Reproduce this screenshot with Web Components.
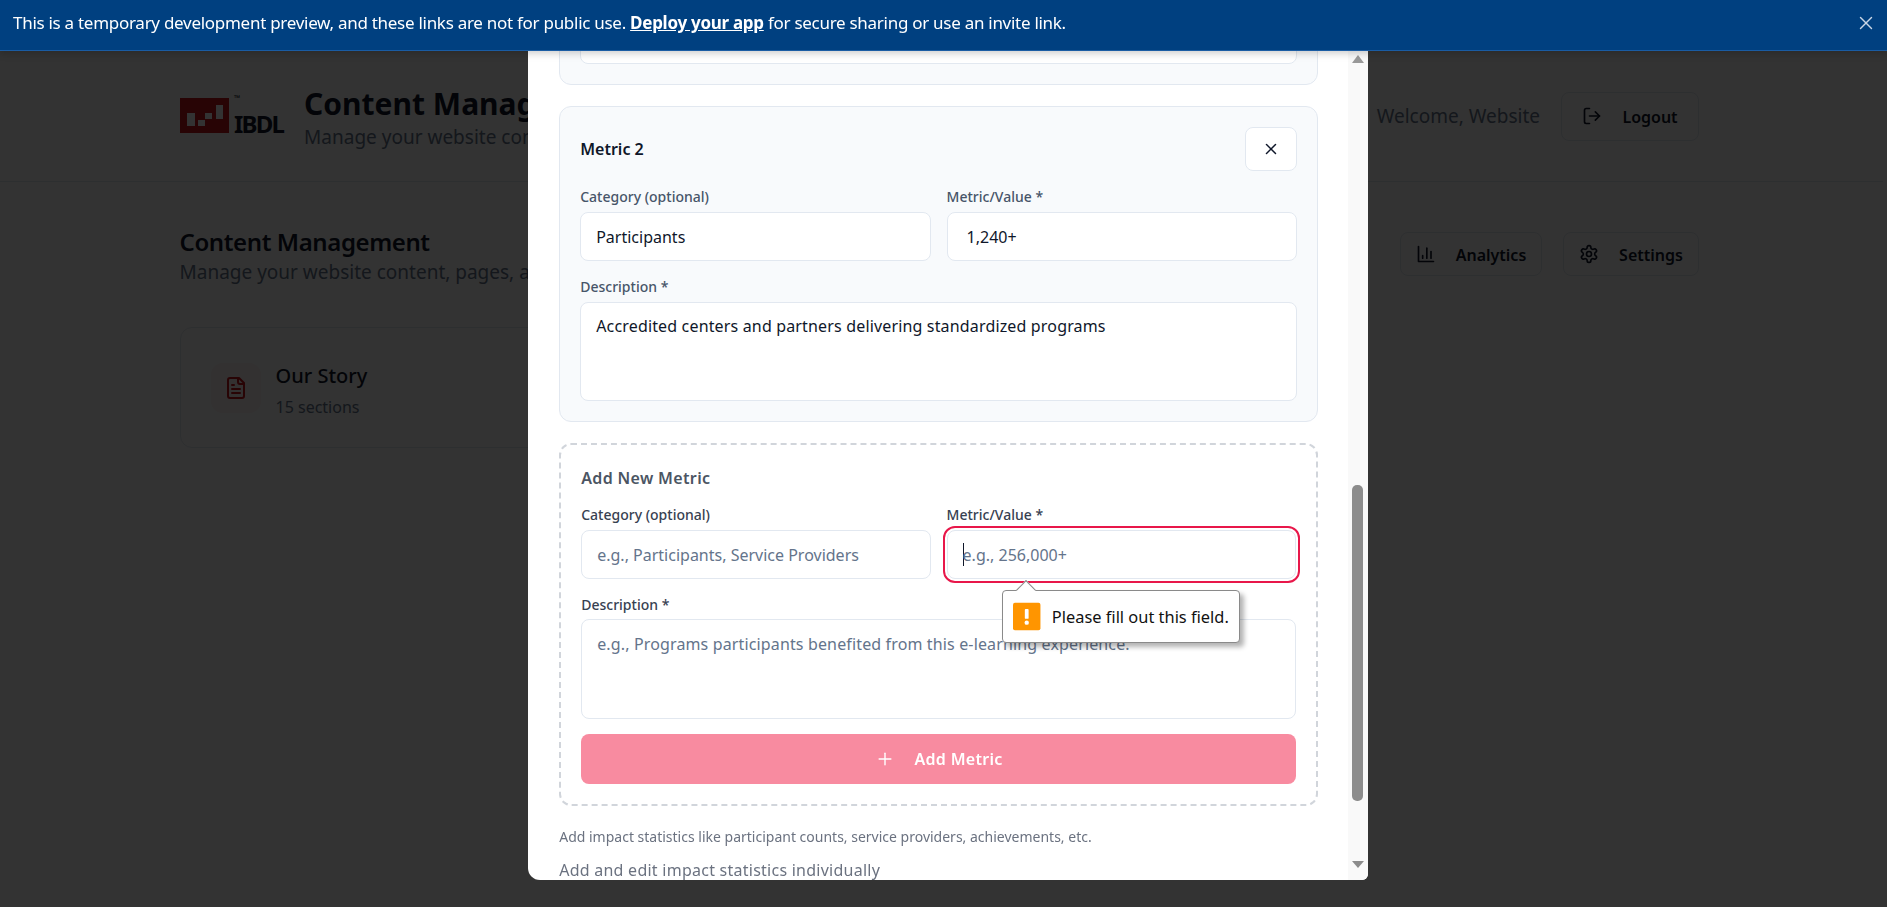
<!doctype html>
<html lang="en">
<head>
<meta charset="utf-8">
<title>Content Management</title>
<style>
  html, body { margin: 0; height: 100%; overflow: hidden; background: #fff; }
  body { font-family: "Noto Sans", "Liberation Sans", sans-serif; color: #0f172a; }
</style>
</head>
<body>
<preview-banner>
  This is a temporary development preview, and these links are not for public use. <a slot="link">Deploy your app</a>
</preview-banner>

<app-header>
  <span slot="title">Content Management</span>
  <span slot="subtitle">Manage your website content and pages</span>
  <span slot="welcome">Welcome, Website</span>
</app-header>

<page-section>
  <span slot="title">Content Management</span>
  <span slot="subtitle">Manage your website content, pages, and settings</span>
  <ghost-button slot="actions" icon="chart" style="width:142px">Analytics</ghost-button>
  <ghost-button slot="actions" icon="gear" style="width:136px">Settings</ghost-button>
  <content-card>
    <span slot="title">Our Story</span>
    <span slot="meta">15 sections</span>
  </content-card>
</page-section>

<modal-backdrop></modal-backdrop>

<modal-dialog>
  <metric-card stub>
    <form-field multiline><span></span></form-field>
  </metric-card>

  <metric-card>
    <span slot="title">Metric 2</span>
    <form-grid>
      <form-field>
        <span slot="label">Category (optional)</span>
        <span>Participants</span>
      </form-field>
      <form-field>
        <span slot="label">Metric/Value *</span>
        <span style="padding-left:4px">1,240+</span>
      </form-field>
    </form-grid>
    <form-field multiline>
      <span slot="label">Description *</span>
      <span style="letter-spacing:.16px">Accredited centers and partners delivering standardized programs</span>
    </form-field>
  </metric-card>

  <add-metric>
    <span slot="title">Add New Metric</span>
    <form-grid>
      <form-field strong empty>
        <span slot="label">Category (optional)</span>
        <span>e.g., Participants, Service Providers</span>
      </form-field>
      <form-field strong empty focused>
        <span slot="label">Metric/Value *</span>
        <span>e.g., 256,000+</span>
        <validation-bubble slot="bubble">Please fill out this field.</validation-bubble>
      </form-field>
    </form-grid>
    <form-field strong empty multiline>
      <span slot="label">Description *</span>
      <span style="letter-spacing:.14px">e.g., Programs participants benefited from this e-learning experience.</span>
    </form-field>
    <span slot="button">Add Metric</span>
  </add-metric>

  <span slot="hint">Add impact statistics like participant counts, service providers, achievements, etc.</span>
  <span slot="note">Add and edit impact statistics individually</span>
</modal-dialog>

<script>
const html = (strings, ...expressions) => {
  const template = document.createElement('template')
  template.innerHTML = strings.reduce((result, str, i) => result + str + (expressions[i] ?? ''), '')
  return template
}

const icons = {
  x: '<path d="M18 6 6 18"/><path d="m6 6 12 12"/>',
  plus: '<path d="M5 12h14"/><path d="M12 5v14"/>',
  logout: '<path d="M9 21H5a2 2 0 0 1-2-2V5a2 2 0 0 1 2-2h4"/><path d="m16 17 5-5-5-5"/><path d="M21 12H9"/>',
  chart: '<path d="M3 3v18h18"/><path d="M18 17V9"/><path d="M13 17V5"/><path d="M8 17v-3"/>',
  gear: '<path d="M12.22 2h-.44a2 2 0 0 0-2 2v.18a2 2 0 0 1-1 1.73l-.43.25a2 2 0 0 1-2 0l-.15-.08a2 2 0 0 0-2.73.73l-.22.38a2 2 0 0 0 .73 2.73l.15.1a2 2 0 0 1 1 1.72v.51a2 2 0 0 1-1 1.74l-.15.09a2 2 0 0 0-.73 2.73l.22.38a2 2 0 0 0 2.73.73l.15-.08a2 2 0 0 1 2 0l.43.25a2 2 0 0 1 1 1.73V20a2 2 0 0 0 2 2h.44a2 2 0 0 0 2-2v-.18a2 2 0 0 1 1-1.73l.43-.25a2 2 0 0 1 2 0l.15.08a2 2 0 0 0 2.73-.73l.22-.39a2 2 0 0 0-.73-2.73l-.15-.08a2 2 0 0 1-1-1.74v-.5a2 2 0 0 1 1-1.74l.15-.09a2 2 0 0 0 .73-2.73l-.22-.38a2 2 0 0 0-2.73-.73l-.15.08a2 2 0 0 1-2 0l-.43-.25a2 2 0 0 1-1-1.73V4a2 2 0 0 0-2-2z"/><circle cx="12" cy="12" r="3"/>',
  file: '<path d="M15 2H6a2 2 0 0 0-2 2v16a2 2 0 0 0 2 2h12a2 2 0 0 0 2-2V7Z"/><path d="M14 2v4a2 2 0 0 0 2 2h4"/><path d="M10 9H8"/><path d="M16 13H8"/><path d="M16 17H8"/>'
}

const icon = (name, size = 20, width = 2) =>
  `<svg width="${size}" height="${size}" viewBox="0 0 24 24" fill="none" stroke="currentColor" stroke-width="${width}" stroke-linecap="round" stroke-linejoin="round">${icons[name]}</svg>`

/** Small base class: stamps a static template into an open shadow root. */
class Base extends HTMLElement {
  constructor() {
    super()
    this.attachShadow({ mode: 'open' })
    this.shadowRoot.appendChild(this.constructor.template.content.cloneNode(true))
  }
}

class PreviewBanner extends Base {
  static template = html`
    <style>
      :host {
        position: fixed; z-index: 30; top: 0; left: 0; right: 0;
        box-sizing: border-box; height: 51px; padding: 0 10px 5px 13px;
        display: flex; align-items: center; justify-content: space-between;
        background: #004080; border-bottom: 1px solid #1a5ca3;
        box-shadow: 0 2px 8px rgba(0, 0, 0, .22);
        color: #fff; font-size: 17px; letter-spacing: -.28px;
      }
      ::slotted(a) { font-weight: 700; text-decoration: underline; }
      svg { display: block; color: #c9d6e6; }
    </style>
    <div><slot></slot><slot name="link"></slot> for secure sharing or use an invite link.</div>
    ${icon('x', 22, 1.5)}
  `
}

class AppHeader extends Base {
  static template = html`
    <style>
      :host {
        display: flex; align-items: center; justify-content: space-between;
        box-sizing: border-box; height: 131px; margin: 51px 4px 0 0;
        padding: 0 184px 0 180px;
        border-bottom: 1px solid #e2e8f0;
      }
      .brand { display: flex; align-items: center; gap: 21px; }
      .logo { display: flex; align-items: flex-end; height: 38px; position: relative; top: -2px; }
      .logo b { font: 700 24px/18px "Noto Sans", sans-serif; color: #0f172a; margin-left: 5px; letter-spacing: -1.8px; }
      .logo i { position: absolute; left: 54px; top: -2px; font: 400 8px/10px "Noto Sans", sans-serif; color: #0f172a; }
      .logo svg { display: block; }
      .title { font-size: 30px; line-height: 41px; font-weight: 700; }
      .sub { font-size: 19px; line-height: 26px; color: #64748b; }
      .user { display: flex; align-items: center; gap: 21px; }
      .welcome { font-size: 19px; color: #64748b; }
    </style>
    <div class="brand">
      <div class="logo">
        <svg width="49" height="35" viewBox="0 0 49 35">
          <rect width="49" height="35" fill="#c8141c"/>
          <g fill="#fff">
            <rect x="7" y="15" width="8" height="13"/>
            <rect x="18" y="22" width="7" height="6"/>
            <rect x="25" y="15" width="7" height="6"/>
            <rect x="36" y="7" width="7" height="14"/>
          </g>
        </svg>
        <b>IBDL</b>
        <i>™</i>
      </div>
      <div>
        <div class="title"><slot name="title"></slot></div>
        <div class="sub"><slot name="subtitle"></slot></div>
      </div>
    </div>
    <div class="user">
      <span class="welcome"><slot name="welcome"></slot></span>
      <ghost-button icon="logout" style="width:138px;height:49px">Logout</ghost-button>
    </div>
  `
}

class GhostButton extends Base {
  static template = html`
    <style>
      :host {
        display: inline-flex; align-items: center; justify-content: center; gap: 20px;
        box-sizing: border-box; height: 44px;
        background: #fff; border: 1px solid #e2e8f0; border-radius: 8px;
        font-size: 16px; font-weight: 600; color: #0f172a;
      }
      #icon { display: flex; }
      .label { padding-top: 2px; }
    </style>
    <span id="icon"></span><span class="label"><slot></slot></span>
  `

  connectedCallback() {
    this.shadowRoot.getElementById('icon').innerHTML = icon(this.getAttribute('icon'), 20, 2)
  }
}

class PageSection extends Base {
  static template = html`
    <style>
      :host { display: block; padding: 42.7px 188px 0 179.5px; }
      .row { display: flex; justify-content: space-between; align-items: flex-start; }
      .title { font-size: 24px; line-height: 34.8px; font-weight: 600; letter-spacing: -.4px; }
      .sub { font-size: 19px; line-height: 27px; color: #64748b; }
      .actions { display: flex; gap: 21px; margin-top: 7.3px; }
      .grid { margin-top: 40.8px; }
    </style>
    <div class="row">
      <div>
        <div class="title"><slot name="title"></slot></div>
        <div class="sub"><slot name="subtitle"></slot></div>
      </div>
      <div class="actions"><slot name="actions"></slot></div>
    </div>
    <div class="grid"><slot></slot></div>
  `
}

class ContentCard extends Base {
  static template = html`
    <style>
      :host {
        display: flex; align-items: center; gap: 15px;
        box-sizing: border-box; width: 500px; height: 121px; padding: 0 30px;
        border: 1px solid #e2e8f0; border-radius: 12px; background: #fff;
      }
      .tile {
        width: 50px; height: 50px; border-radius: 12px; background: #fef2f2;
        display: flex; align-items: center; justify-content: center; color: #c8141c;
      }
      .text { padding-top: 4.6px; }
      .title { font-size: 20px; line-height: 30px; font-weight: 500; }
      .meta { font-size: 16px; line-height: 24px; margin-top: 4px; color: #64748b; }
    </style>
    <div class="tile">${icon('file', 24, 2)}</div>
    <div class="text">
      <div class="title"><slot name="title"></slot></div>
      <div class="meta"><slot name="meta"></slot></div>
    </div>
  `
}

class ModalBackdrop extends Base {
  static template = html`
    <style>
      :host { position: fixed; z-index: 10; inset: 0; background: rgba(0, 0, 0, .8); }
    </style>
  `
}

class ModalDialog extends Base {
  static template = html`
    <style>
      :host {
        position: fixed; z-index: 20; left: 528px; top: 51px; width: 840px; height: 829px;
        background: #fff; border-radius: 0 0 6px 12px; overflow: hidden;
      }
      .scroll {
        box-sizing: border-box; height: 100%; padding: 0 50px 0 31.2px;
        display: flex; flex-direction: column; justify-content: flex-end; gap: 21px;
      }
      ::slotted(metric-card), ::slotted(add-metric) { flex: none; }
      .hint { font-size: 14px; line-height: 20px; color: #6b7280; }
      .note { font-size: 16px; line-height: 24px; color: #6b7280; margin: -10px 0 -2px; letter-spacing: .25px; }
    </style>
    <div class="scroll">
      <slot></slot>
      <div class="hint"><slot name="hint"></slot></div>
      <div class="note"><slot name="note"></slot></div>
    </div>
    <modal-scrollbar></modal-scrollbar>
  `
}

class ModalScrollbar extends Base {
  static template = html`
    <style>
      :host {
        position: absolute; top: 0; right: 0; bottom: 0; width: 20px;
        box-sizing: border-box; padding: 4px 0 12px;
        display: flex; flex-direction: column; align-items: center;
        background: #f9f9f9;
      }
      .up, .down { width: 0; height: 0; border: solid transparent; border-width: 0 6.5px; margin-right: 1px; }
      .up { border-bottom: 8px solid #999; }
      .down { border-top: 7px solid #8c8c8c; }
      .thumb { width: 11px; height: 316px; margin: auto 1px 60px 0; border-radius: 5px; background: #8c8c8c; }
    </style>
    <div class="up"></div>
    <div class="thumb"></div>
    <div class="down"></div>
  `
}

class MetricCard extends Base {
  static template = html`
    <style>
      :host {
        display: block; box-sizing: border-box; padding: 20px;
        background: #f8fafc; border: 1px solid #e2e8f0; border-radius: 12px;
      }
      .head { display: flex; align-items: center; justify-content: space-between; margin-bottom: 16px; }
      :host([stub]) .head { display: none; }
      .title { font-size: 16px; font-weight: 600; color: #0f172a; }
      .close {
        box-sizing: border-box; width: 52px; height: 44px;
        display: flex; align-items: center; justify-content: center;
        background: #fff; border: 1px solid #e2e8f0; border-radius: 8px; color: #0f172a;
      }
      .body { display: flex; flex-direction: column; gap: 16px; }
    </style>
    <div class="head">
      <span class="title"><slot name="title"></slot></span>
      <div class="close">${icon('x', 18, 2)}</div>
    </div>
    <div class="body"><slot></slot></div>
  `
}

class AddMetric extends Base {
  static template = html`
    <style>
      :host {
        display: block; box-sizing: border-box; padding: 20.6px 20px 20px;
        border: 2px dashed #d1d5db; border-radius: 12px;
      }
      .title { font-size: 16px; line-height: 24px; font-weight: 600; color: #4b5563; margin-bottom: 15px; letter-spacing: .35px; }
      .body { display: flex; flex-direction: column; gap: 16px; }
      .add {
        height: 50px; margin-top: 15px; border-radius: 8px; background: #f88ba0; color: #fff;
        display: flex; align-items: center; justify-content: center; gap: 20px;
        font-size: 16px; font-weight: 600; letter-spacing: .3px;
      }
      svg { display: block; }
    </style>
    <div class="title"><slot name="title"></slot></div>
    <div class="body"><slot></slot></div>
    <div class="add">${icon('plus', 20, 1.7)}<span><slot name="button"></slot></span></div>
  `
}

class FormGrid extends Base {
  static template = html`
    <style>
      :host { display: grid; grid-template-columns: 1fr 1fr; gap: 16px; }
    </style>
    <slot></slot>
  `
}

class FormField extends Base {
  static template = html`
    <style>
      :host { display: block; position: relative; min-width: 0; }
      .label { font-size: 14px; line-height: 20px; font-weight: 500; color: #475569; margin-bottom: 4.5px; }
      :host([strong]) .label { color: #374151; }
      .box {
        box-sizing: border-box; height: 49.4px; padding: 1.5px 15px 0;
        display: flex; align-items: center;
        background: #fff; border: 1px solid #e2e8f0; border-radius: 8px;
        font-size: 16px; line-height: 24px; color: #0f172a;
      }
      :host([multiline]) .box { height: 99.6px; align-items: flex-start; padding-top: 11.6px; }
      :host([empty]) .box { color: #64748b; }
      :host([focused]) .box { outline: 2px solid #e8174a; outline-offset: 2.6px; }
      .caret { display: none; width: 1px; height: 23px; background: #0f172a; margin-right: -1px; }
      :host([focused]) .caret { display: block; }
    </style>
    <div class="label"><slot name="label"></slot></div>
    <div class="box"><span class="caret"></span><slot></slot></div>
    <slot name="bubble"></slot>
  `
}

class ValidationBubble extends Base {
  static template = html`
    <style>
      :host {
        position: absolute; z-index: 5; left: 55.8px; top: 84.6px;
        display: flex; align-items: center; gap: 11px;
        box-sizing: border-box; width: 237.4px; height: 53.4px; padding: 0 10px;
        background: #fff; border: 1px solid #8a8a8a; border-radius: 4px;
        box-shadow: 4px 4px 5px rgba(0, 0, 0, .3);
        font-size: 16.4px; color: #111; white-space: nowrap;
      }
      .arrow {
        position: absolute; left: 15.7px; top: -8px; width: 14px; height: 14px;
        background: #fff; border: solid #8a8a8a; border-width: 1px 0 0 1px;
        box-sizing: border-box; transform: rotate(45deg);
      }
      svg { display: block; }
    </style>
    <span class="arrow"></span>
    <svg width="29" height="29" viewBox="0 0 29 29">
      <rect width="29" height="29" rx="2" fill="#ff9500"/>
      <rect x="12.5" y="6.5" width="4" height="10.5" rx="1" fill="#fff"/>
      <circle cx="14.5" cy="21" r="2.3" fill="#fff"/>
    </svg>
    <span><slot></slot></span>
  `
}

const elements = {
  'preview-banner': PreviewBanner,
  'app-header': AppHeader,
  'ghost-button': GhostButton,
  'page-section': PageSection,
  'content-card': ContentCard,
  'modal-backdrop': ModalBackdrop,
  'modal-dialog': ModalDialog,
  'modal-scrollbar': ModalScrollbar,
  'metric-card': MetricCard,
  'add-metric': AddMetric,
  'form-grid': FormGrid,
  'form-field': FormField,
  'validation-bubble': ValidationBubble
}

Object.entries(elements).forEach(([name, element]) => customElements.define(name, element))
</script>
</body>
</html>
